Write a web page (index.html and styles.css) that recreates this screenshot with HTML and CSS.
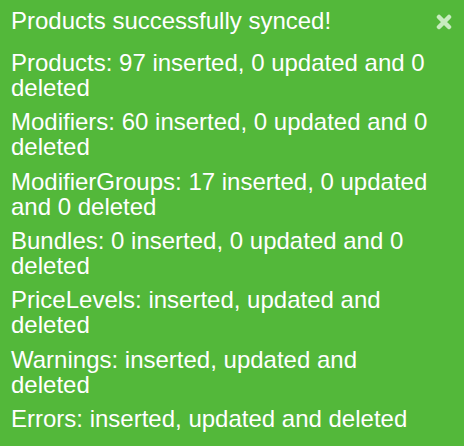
FILE: index.html
```html
<!DOCTYPE html>
<html lang="en">
  <head>
    <meta charset="UTF-8" />
    <title>Sync result</title>
    <link rel="stylesheet" href="styles.css">
  </head>
  <body>
    <div class="toast">
      <div class="toast-head">
        <div class="toast-title">Products successfully synced!</div>
        <button class="toast-close" aria-label="Close">
          <svg width="16" height="16" viewBox="0 0 16 16">
            <path d="M3 3 L13 13 M13 3 L3 13" stroke="currentColor" stroke-width="4.5" stroke-linecap="round" />
          </svg>
        </button>
      </div>
      <ul class="toast-list">
        <li>Products: 97 inserted, 0 updated and 0 deleted</li>
        <li>Modifiers: 60 inserted, 0 updated and 0 deleted</li>
        <li>ModifierGroups: 17 inserted, 0 updated and 0 deleted</li>
        <li>Bundles: 0 inserted, 0 updated and 0 deleted</li>
        <li>PriceLevels: inserted, updated and deleted</li>
        <li>Warnings: inserted, updated and deleted</li>
        <li>Errors: inserted, updated and deleted</li>
      </ul>
    </div>
  </body>
</html>
```

FILE: styles.css
```css
body {
  margin: 0;
  background-color: #53b83a;
  font-family: "Liberation Sans", Arial, sans-serif;
  color: #fff;
}
.toast {
  width: 464px;
  height: 446px;
  box-sizing: border-box;
  padding: 8px 11px 0 11px;
}
.toast-head {
  display: flex;
  justify-content: space-between;
  align-items: flex-start;
}
.toast-title {
  font-size: 24px;
  line-height: 25px;
}
.toast-close {
  background: none;
  border: none;
  padding: 0;
  margin-top: 6px;
  margin-right: 1px;
  color: #c8ebbf;
  cursor: pointer;
}
.toast-list {
  list-style: none;
  margin: 17px 0 0;
  padding: 0;
  font-size: 24px;
  line-height: 25px;
  width: 420px;
}
.toast-list li {
  margin-bottom: 9.33px;
}
```
